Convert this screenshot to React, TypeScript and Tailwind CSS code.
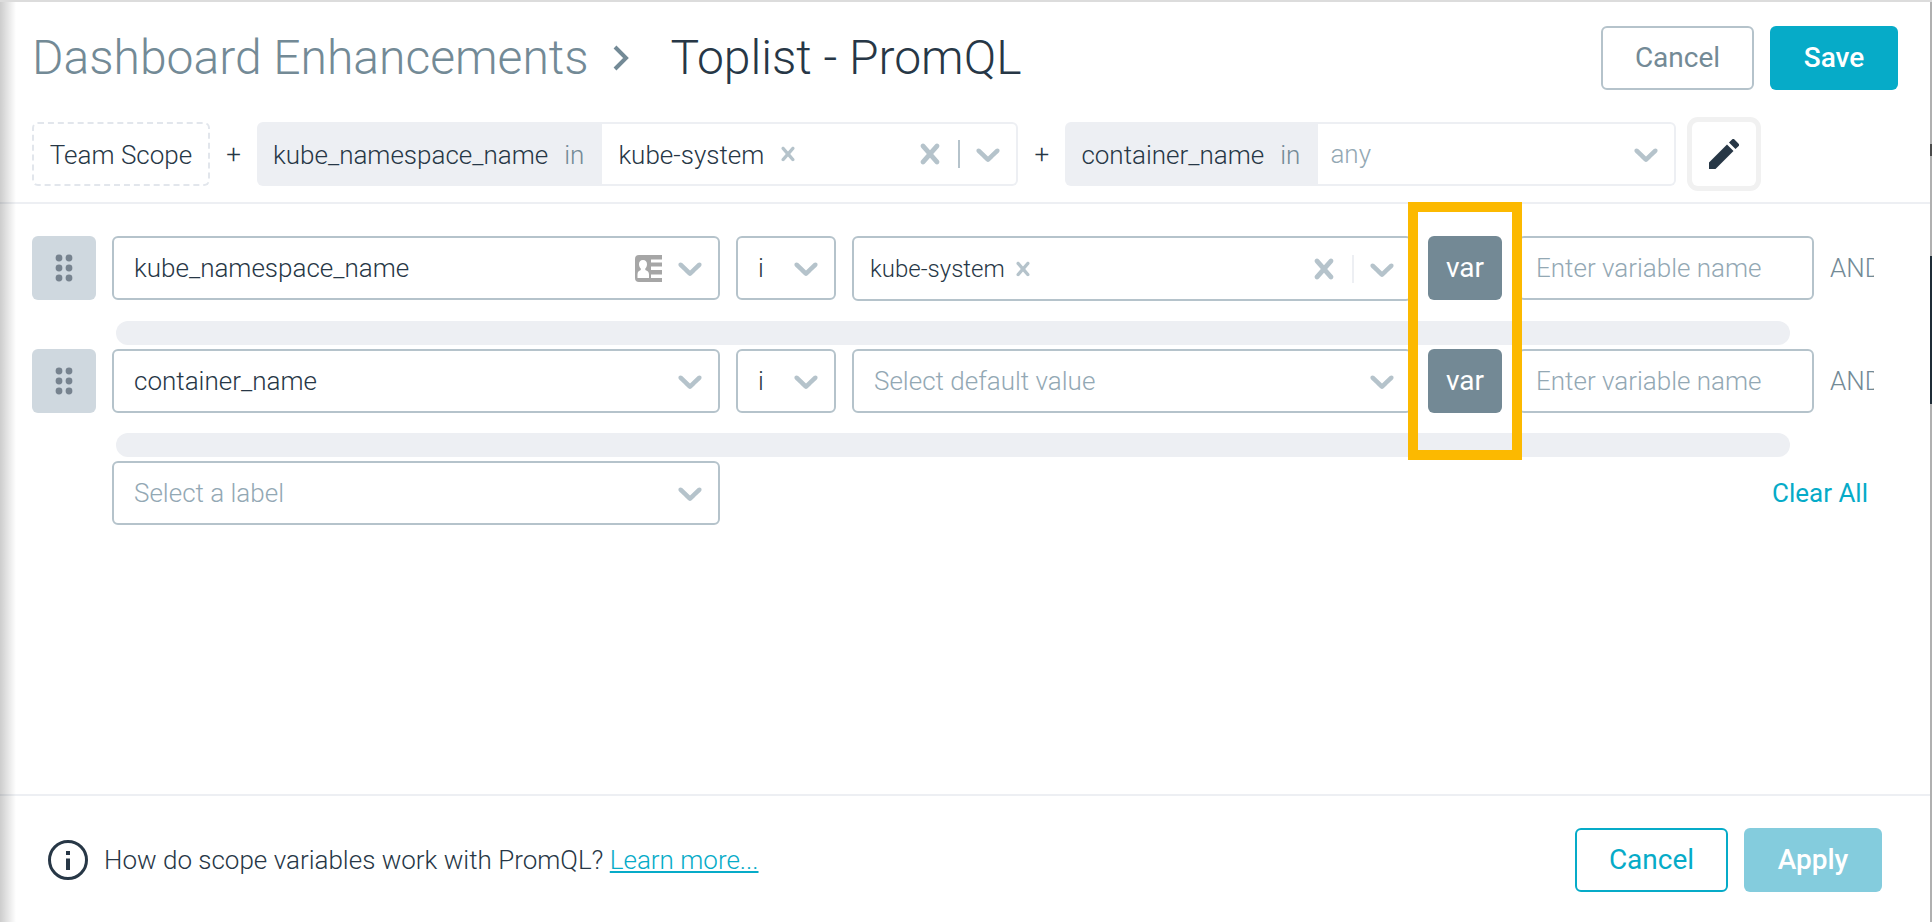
import { useState } from 'react'
import type { ReactNode } from 'react'

const Chevron = () => (
  <svg viewBox="0 0 20 20" className="w-10 h-10 fill-[#b5c3cb]" aria-hidden="true">
    <path d="M4.516 7.548c0.436-0.446 1.043-0.481 1.576 0l3.908 3.747 3.908-3.747c0.533-0.481 1.141-0.446 1.574 0 0.436 0.445 0.408 1.197 0 1.615-0.406 0.418-4.695 4.502-4.695 4.502-0.217 0.223-0.502 0.335-0.787 0.335s-0.57-0.112-0.789-0.335c0 0-4.287-4.084-4.695-4.502s-0.436-1.17 0-1.615z" />
  </svg>
)

const Cross = ({ className }: { className: string }) => (
  <svg viewBox="0 0 20 20" className={`fill-[#b5c3cb] ${className}`} aria-hidden="true">
    <path d="M14.348 14.849c-0.469 0.469-1.229 0.469-1.697 0l-2.651-3.030-2.651 3.029c-0.469 0.469-1.229 0.469-1.697 0-0.469-0.469-0.469-1.229 0-1.697l2.758-3.15-2.759-3.152c-0.469-0.469-0.469-1.228 0-1.697s1.228-0.469 1.697 0l2.652 3.031 2.651-3.031c0.469-0.469 1.228-0.469 1.697 0s0.469 1.229 0 1.697l-2.758 3.152 2.758 3.15c0.469 0.469 0.469 1.229 0 1.698z" />
  </svg>
)

const ContactCard = () => (
  <svg viewBox="0 0 27 27" className="w-[27px] h-[27px]" aria-hidden="true">
    <path fill="#a6a6a6" d="M4 0H27V4.500H16V7.500H27V11.500H16V15H27V19.500H16V23H27V27H4a4 4 0 0 1-4-4V4a4 4 0 0 1 4-4z" />
    <path fill="#fff" d="M8 5c2.600 0 4 1.700 4 4.300 0 1.900-.7 3.300-1.700 4.200v1.500c2.200.8 3.700 2 3.700 4.500V23H2.500v-3.500c0-2.500 1.300-3.700 3.300-4.500v-1.500C4.700 12.600 4 11.200 4 9.300 4 6.700 5.400 5 8 5z" />
  </svg>
)

const Grip = () => (
  <svg viewBox="0 0 18 28" className="w-[18px] h-7 fill-[#77838f]" aria-hidden="true">
    {[4, 14, 24].map((y) => (
      <g key={y}>
        <circle cx="4" cy={y} r="3.400" />
        <circle cx="14" cy={y} r="3.400" />
      </g>
    ))}
  </svg>
)

type SelectBoxProps = {
  label: string
  options: string[]
  box: string
  text: string
  icon?: ReactNode
}

function SelectBox({ label, options, box, text, icon }: SelectBoxProps) {
  return (
    <div className={`relative h-16 min-w-0 bg-white ${box}`}>
      <select aria-label={label} className={`w-full h-full appearance-none bg-transparent outline-none ${text}`}>
        {options.map((o) => (
          <option key={o}>{o}</option>
        ))}
      </select>
      <div className="absolute inset-y-0 right-2 flex items-center gap-2 pointer-events-none">
        {icon}
        <Chevron />
      </div>
    </div>
  )
}

type MultiSelectProps = { value: string; box: string; text: string; separator: string }

function MultiSelect({ value, box, text, separator }: MultiSelectProps) {
  return (
    <div className={`flex min-w-0 items-center pr-2 bg-white ${box}`}>
      <span className={text}>{value}</span>
      <button aria-label={`Remove ${value}`}>
        <Cross className="w-7 h-7" />
      </button>
      <button aria-label="Clear values" className="ml-auto">
        <Cross className="w-10 h-10" />
      </button>
      <span className={`mx-2 w-[2px] h-7 ${separator}`} />
      <button aria-label="Show values">
        <Chevron />
      </button>
    </div>
  )
}

function ScopeLabel({ name }: { name: string }) {
  return (
    <div className="flex h-16 items-center gap-4 rounded-l-md bg-[#edeff3] pt-[2px] pl-4 pr-[18px]">
      <span>{name}</span>
      <span className="text-[#738a96]">in</span>
    </div>
  )
}

const fieldBorder = 'rounded-md border-2 border-[#b5c3cb]'

function FilterRow({ label, icon, value, highlight }: { label: string; icon?: ReactNode; value?: string; highlight?: boolean }) {
  const [name, setName] = useState('')

  return (
    <>
      <button aria-label={`Move ${label}`} className="col-start-1 flex h-16 items-center justify-center rounded-md bg-[#cfd8df]">
        <Grip />
      </button>
      <SelectBox label="Label" options={[label]} box={fieldBorder} text="pl-5 pr-24" icon={icon} />
      <SelectBox label="Operator" options={['in']} box={fieldBorder} text="pl-5 pr-[70px]" />
      {value ? (
        <MultiSelect value={value} box={`h-[65px] pl-4 ${fieldBorder}`} text="mr-1 text-2xl" separator="bg-[#edeff3]" />
      ) : (
        <SelectBox label="Default value" options={['Select default value']} box={fieldBorder} text="pl-5 pr-12 text-[#93a8b4]" />
      )}
      <div className="relative">
        <button className="w-full h-16 rounded-md bg-[#738995] text-[28px] font-normal text-white">var</button>
        {highlight && (
          <div className="absolute -inset-x-5 -top-[34px] z-10 h-[258px] border-[10px] border-[#fcb900] pointer-events-none" />
        )}
      </div>
      <input
        aria-label="Variable name"
        placeholder="Enter variable name"
        value={name}
        onChange={(e) => setName(e.target.value)}
        className={`h-16 w-full min-w-0 bg-white px-4 outline-none placeholder:text-[#93a8b4] ${fieldBorder}`}
      />
      <span className="flex h-16 items-center overflow-hidden text-[#738a96]">AND</span>
      <div className="col-start-2 col-span-5 mt-5 mb-1 ml-1 mr-6 h-6 rounded-full bg-[#edeff3]" />
    </>
  )
}

export default function App() {
  return (
    <div className="relative flex min-h-screen border-t-2 border-[#dcdcdc] bg-white font-['Roboto','Liberation_Sans',sans-serif] text-[26px] leading-8 font-light text-[#273746]">
      {/* Panel shadow */}
      <div className="absolute inset-y-0 left-0 z-20 w-4 bg-gradient-to-r from-black/20 to-transparent pointer-events-none" />

      <main className="flex min-w-0 flex-1 flex-col">
        {/* Header */}
        <header className="flex items-center px-8 pt-6">
          <h1 className="flex flex-1 items-center text-5xl leading-[64px]">
            <a href="#dashboard" className="text-[#738a96]">Dashboard Enhancements</a>
            <svg viewBox="0 0 16 28" className="ml-6 mr-[42px] w-4 h-7 fill-none stroke-[#738a96]" strokeWidth="4" aria-hidden="true">
              <path d="M2 3l11 11L2 25" />
            </svg>
            <span>Toplist - PromQL</span>
          </h1>
          <div className="flex gap-4 text-[28px] font-normal">
            <button className="h-16 w-[153px] rounded-md border-2 border-[#b5c3cb] text-[#738a96]">Cancel</button>
            <button className="h-16 w-32 rounded-md bg-[#06abc8] font-medium text-white">Save</button>
          </div>
        </header>

        {/* Scope bar */}
        <section className="flex items-center gap-4 border-b-2 border-[#edeff3] px-8 pt-8 pb-4">
          <div className="flex h-16 w-[178px] items-center justify-center rounded-md border-2 border-dashed border-[#e2e6ec] pt-[2px]">Team Scope</div>
          <span className="w-[15px] text-center">+</span>
          <div className="flex">
            <ScopeLabel name="kube_namespace_name" />
            <MultiSelect
              value="kube-system"
              box="h-16 w-[416px] rounded-r-md border-2 border-l-0 border-[#edeff3] pl-4"
              text="mr-[10px] pt-[2px]"
              separator="bg-[#b5c3cb]"
            />
          </div>
          <span className="w-[15px] text-center">+</span>
          <div className="flex">
            <ScopeLabel name="container_name" />
            <SelectBox
              label="container_name"
              options={['any']}
              box="w-[358px] rounded-r-md border-2 border-l-0 border-[#edeff3]"
              text="pl-3 pr-12 text-[#93a8b4]"
            />
          </div>
          <button aria-label="Edit scope" className="flex w-16 h-16 items-center justify-center rounded-md ring-[5px] ring-[#f1f1f1]">
            <svg viewBox="0 0 30 30" className="w-[30px] h-[30px] fill-[#273746]" aria-hidden="true">
              <path d="M0 23.500L18 5.500L24.500 12L6.500 30H0zM20 3.500L22.800.7a2 2 0 0 1 2.900 0L29.400 4.400a2 2 0 0 1 0 2.900L26.500 10z" />
            </svg>
          </button>
        </section>

        {/* Filters */}
        <section className="grid grid-cols-[64px_minmax(0,608fr)_100px_minmax(0,560fr)_74px_296px_44px] gap-x-4 pt-8 pl-8 pr-14">
          <FilterRow label="kube_namespace_name" icon={<ContactCard />} value="kube-system" highlight />
          <FilterRow label="container_name" />
          <SelectBox label="New label" options={['Select a label']} box={`col-start-2 ${fieldBorder}`} text="pl-5 pr-12 text-[#93a8b4]" />
          <button className="col-start-6 col-span-2 justify-self-end px-1.5 font-normal text-[#06abc8]">Clear All</button>
        </section>

        {/* Footer */}
        <footer className="mt-auto flex items-center border-t-2 border-[#edeff3] px-12 pt-8 pb-[30px]">
          <svg viewBox="0 0 40 40" className="w-10 h-10 fill-[#273746]" aria-hidden="true">
            <circle cx="20" cy="20" r="18.500" fill="none" stroke="#273746" strokeWidth="3" />
            <path d="M18 11h4v4h-4zM18 18.500h4v11.500h-4z" />
          </svg>
          <p className="ml-4 flex-1">
            How do scope variables work with PromQL?{' '}
            <a href="#learn-more" className="text-[#06abc8] underline">Learn more...</a>
          </p>
          <div className="flex gap-4 text-[28px] font-normal">
            <button className="h-16 w-[153px] rounded-md border-2 border-[#06abc8] text-[#06abc8]">Cancel</button>
            <button className="h-16 w-[138px] rounded-md bg-[#84ccdd] font-medium text-white">Apply</button>
          </div>
        </footer>
      </main>

      {/* Page edge behind the panel */}
      <div className="flex w-[2px] flex-col bg-[#b0b0b0]">
        <div className="mt-[142px] h-3 bg-[#4b4b4b]" />
        <div className="mt-[100px] h-[148px] bg-[#1f2d38]" />
      </div>
    </div>
  )
}
